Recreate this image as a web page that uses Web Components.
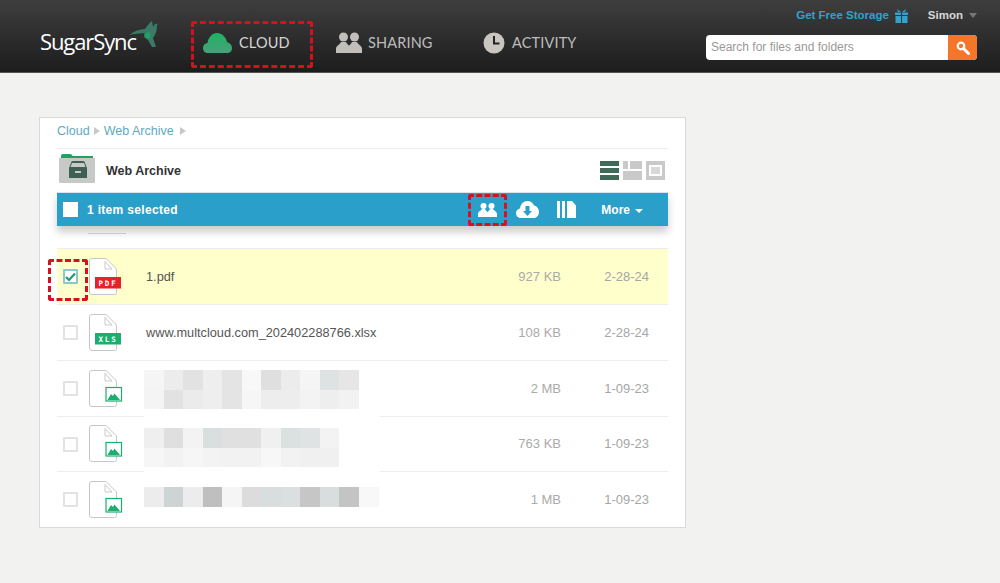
<!doctype html>
<html><head><meta charset="utf-8">
<style>
html,body{margin:0;padding:0}
body{width:1000px;height:583px;overflow:hidden;background:#f2f2f0;font-family:"Liberation Sans",Arial,sans-serif}
</style></head><body>
<ss-app></ss-app>
<script>
const def=(name,html,init)=>customElements.define(name,class extends HTMLElement{
  connectedCallback(){ if(this.shadowRoot) return; const r=this.attachShadow({mode:'open'}); r.innerHTML=typeof html==='function'?html(this):html; init&&init(r,this);}
});
const a=(e,n,d='')=>e.getAttribute(n)??d;

def('ss-mark',e=>`<style>:host{position:absolute;box-sizing:border-box;display:block;border:3px dashed #d7101f;border-radius:3px;left:${a(e,'l')}px;top:${a(e,'t')}px;width:${a(e,'w')}px;height:${a(e,'h')}px;z-index:5;pointer-events:none}</style>`);

const bird=`<svg width="30" height="30" viewBox="0 0 30 30" style="display:block"><path fill="#3b7a66" d="M1 15 C6 11 12 9 17 9 C19 6 21 3 24 1 L25 7 C26 5 27 3 30 4 L29 5 C29 10 28 14 25 18 L28 27 L24 27 L20 20 L16 17 L17 13 C12 13 6 14 1 15Z"/><path fill="#1fa45f" d="M16 14 L22 12 L22 18 L18 18Z"/></svg>`;
def('ss-logo',`<style>:host{display:block;position:relative;width:151px;height:72px;flex:none}
.t{position:absolute;left:0;top:26px;font:500 22px/30px "Open Sans",sans-serif;color:#fff;letter-spacing:-1.1px}
.b{position:absolute;left:88px;top:20px}</style><span class="t">SugarSync</span><span class="b">${bird}</span>`);

const icons={
 cloud:`<svg width="29" height="20" viewBox="0 0 29 20" style="display:block"><defs><linearGradient id="c" x1="0" y1="0" x2="0" y2="1"><stop offset="0" stop-color="#1cb463"/><stop offset="1" stop-color="#4a9f7b"/></linearGradient></defs><path fill="url(#c)" d="M5 20 C2 20 0 18 0 15 C0 12 2 10.500 4.500 10 C5 5 9 0 14 0 C19 0 23 4 24 9 C27 10 29 12 29 15 C29 18 27 20 24 20Z"/></svg>`,
 people:`<svg width="26" height="21" viewBox="0 0 26 21" style="display:block"><g fill="#c2bfba"><circle cx="7.500" cy="5" r="4.500"/><circle cx="18.500" cy="5" r="4.500"/><path d="M0 21 V17 C0 13.500 4 12.500 5 10 H10 C11 12.500 13 13 13 14 C13 13 15 12.500 16 10 H21 C22 12.500 26 13.500 26 17 V21Z"/></g></svg>`,
 clock:`<svg width="22" height="22" viewBox="0 0 22 22" style="display:block"><circle cx="11" cy="11" r="10.500" fill="#c9c6c1"/><path d="M10 4 H12 V10.500 L16.500 10.500 V12.500 H10Z" fill="#222"/></svg>`
};
def('ss-nav-item',e=>`<style>:host{display:flex;align-items:center;position:relative;height:47px;box-sizing:border-box;padding-bottom:4px;padding-left:${a(e,'pl','0')}px;color:${a(e,'color','#bdbdbd')};font:400 14.500px/20px Lato,sans-serif;letter-spacing:.15px;width:${a(e,'w')}px;flex:none}
.i{width:${a(e,'iw')}px;flex:none;display:flex}
slot{display:block}</style><span class="i">${icons[a(e,'icon')]}</span><slot></slot>`);

def('ss-search',`<style>:host{display:flex;width:271px;height:25px;border-radius:4px;overflow:hidden;background:#fff}
.f{flex:1;padding-left:5px;font:12px/25px "Liberation Sans",sans-serif;color:#999}
.b{width:29px;background:#f5762a;display:flex;align-items:center;justify-content:center}</style>
<span class="f">Search for files and folders</span><span class="b"><svg width="14" height="14" viewBox="0 0 14 14"><circle cx="5" cy="5" r="3.300" fill="none" stroke="#fff" stroke-width="2.200"/><path d="M7.500 7.500 L12.500 12.500" stroke="#fff" stroke-width="3" stroke-linecap="round"/></svg></span>`);

def('ss-header',`<style>:host{display:flex;height:73px;box-sizing:border-box;padding-left:40px;background:linear-gradient(#3e3e3e,#1d1d1d);border-bottom:1px solid #555;}
nav{display:flex;align-items:center;height:47px;margin-top:21px}
.right{margin-left:auto;margin-right:23px;display:flex;flex-direction:column;align-items:flex-end}
.top{display:flex;align-items:center;height:35px;box-sizing:border-box;padding-bottom:5px;font:bold 11.500px/16px "Liberation Sans",sans-serif}
.gf{color:#34a0cc;margin-right:5px}
.sn{color:#d8d8d8;margin-left:19px;margin-right:6px}
.car{width:0;height:0;border:4px solid transparent;border-top:5px solid #777;border-bottom:0}
</style>
<ss-logo></ss-logo>
<nav>
 <ss-nav-item icon="cloud" pl="12" iw="36" w="145" color="#d6d6d6">CLOUD<ss-mark l="0" t="0" w="122" h="47" style="display:block"></ss-mark></ss-nav-item>
 <ss-nav-item icon="people" iw="32" w="147">SHARING</ss-nav-item>
 <ss-nav-item icon="clock" iw="29" w="120">ACTIVITY</ss-nav-item>
</nav>
<div class="right">
 <div class="top"><span class="gf">Get Free Storage</span>
 <svg width="15" height="15" viewBox="0 0 15 15"><path fill="#34a0cc" d="M1 4.500 H7 V7 H1Z M8 4.500 H14 V7 H8Z M1.500 8 H7 V15 H1.500Z M8 8 H13.500 V15 H8Z M3 1 L7 4 H4 Z M12 1 L8 4 H11Z"/></svg>
 <span class="sn">Simon</span><span class="car"></span></div>
 <ss-search></ss-search>
</div>`);

def('ss-crumbs',`<style>:host{display:flex;align-items:center;height:31px;box-sizing:border-box;padding-bottom:4px;border-bottom:1px solid #ececec;font:12.500px/16px "Liberation Sans",sans-serif;color:#5fa9bf}
.s{width:0;height:0;border:4px solid transparent;border-left:6px solid #c8c8c8;border-right:0;margin:0 4px}
</style><span>Cloud</span><span class="s"></span><span>Web Archive</span><span class="s" style="margin-left:6px"></span>`);

def('ss-views',`<style>:host{display:flex;gap:4px;margin-left:auto;margin-right:3px}svg{display:block}</style>
<svg width="19" height="19" viewBox="0 0 19 19"><path fill="#3f6a58" d="M0 0H19V5H0Z M0 7H19V12H0Z M0 14H19V19H0Z"/></svg>
<svg width="19" height="19" viewBox="0 0 19 19"><path fill="#c9c9c9" d="M0 0H5V8H0Z M7 0H19V8H7Z M0 10H19V19H0Z"/></svg>
<svg width="19" height="19" viewBox="0 0 19 19"><path fill="#c9c9c9" fill-rule="evenodd" d="M0 0H19V19H0Z M3 4V15H16V4Z"/><path fill="#d8d8d8" d="M5 6H14V13H5Z"/></svg>`);

def('ss-title',`<style>:host{display:flex;align-items:center;height:43px;font:bold 12.500px/16px "Liberation Sans",sans-serif;color:#333}
svg{display:block;margin:-5px 11px 0 2px;flex:none}</style>
<svg width="36" height="29" viewBox="0 0 36 29"><path fill="#1fa45f" d="M2 2 Q2 0 4 0 H11 Q13 0 13.500 2 H34 V4 H2Z"/><path fill="#c6c9c6" d="M0 4 H36 V28 Q36 29 35 29 H1 Q0 29 0 28Z"/><path fill="#3f5f55" d="M12 9 Q12 7 14 7 H24 Q26 7 26 9 L28 14 V24 H10 V14Z"/><path fill="#c6c9c6" d="M13 9 H25 L26.500 13 H11.500Z"/><rect x="16" y="17" width="6" height="2" fill="#c6c9c6"/></svg>
<slot></slot><ss-views></ss-views>`);

def('ss-bar',`<style>:host{display:flex;align-items:center;position:relative;z-index:2;height:34px;background:#2a9fc9;color:#fff;box-shadow:0 6px 8px rgba(0,0,0,.2);font:bold 12px/16px "Liberation Sans",sans-serif;border-top:1px solid #d5e7ee;box-sizing:border-box}
.c{width:15px;height:15px;background:#fff;margin:0 9px 0 6px;flex:none}
.t{letter-spacing:.32px}
.sp{flex:1}
.ic{position:relative;display:flex;align-items:center;justify-content:center;flex:none}
.more{display:flex;align-items:center;margin-left:25px;margin-right:25px}
.car{width:0;height:0;border:4px solid transparent;border-top:4px solid #fff;border-bottom:0;margin-left:5px;margin-top:3px}
</style>
<span class="c"></span><span class="t">1 item selected</span><span class="sp"></span>
<span class="ic" style="width:19px;margin-right:19px"><svg width="19" height="14" viewBox="0 0 19 14"><g fill="#fff"><circle cx="5.500" cy="3" r="3"/><circle cx="13.500" cy="3" r="3"/><path d="M0 14 V11 C0 8.500 3 8 4 6 H7 C8 8 9.500 8.500 9.500 9.500 C9.500 8.500 11 8 12 6 H15 C16 8 19 8.500 19 11 V14Z"/></g></svg>
<ss-mark l="-10" t="-9" w="39" h="32" style="display:block"></ss-mark></span>
<span class="ic" style="width:23px;margin-right:18px"><svg width="23" height="17" viewBox="0 0 23 17"><path fill="#fff" d="M5 17 C1.500 17 0 14.500 0 12 C0 9.500 2 8 4 7.500 C4.500 3 7.500 0 11.500 0 C14.500 0 17 2 18 4.500 C21 5 23 8 23 11 C23 14.500 20.500 17 18 17Z"/><path fill="#2a9fc9" d="M9.500 5 H13.500 V10 H16 L11.500 15 L7 10 H9.500Z"/></svg></span>
<span class="ic" style="width:19px"><svg width="19" height="17" viewBox="0 0 19 17"><path fill="#fff" d="M0 0H3V17H0Z M5 0H8V17H5Z M10 0H15L19 4.500V17H10Z"/></svg></span>
<span class="more">More<span class="car"></span></span>`);

const doc=`<path fill="#fff" stroke="#c6c6c6" stroke-width="1" d="M3 .500 H17 L27.500 11 V34.500 Q27.500 36.500 25.500 36.500 H3 Q.500 36.500 .500 34 V3 Q.500 .500 3 .500Z"/><path fill="#fff" stroke="#c9c9c9" d="M16 3.500 V11 H23Z"/>`;
const badge=(fill,t)=>`<rect x="6" y="19" width="26" height="11.500" fill="${fill}"/><text x="19" y="27.500" text-anchor="middle" font-family="DejaVu Sans Mono,monospace" font-weight="bold" font-size="7.500" letter-spacing="1.800" fill="#fff">${t}</text>`;
const img=`<rect x="17" y="17.500" width="15.500" height="13.500" fill="#fff" stroke="#1cae6e" stroke-width="1.200"/><path fill="#1cae6e" d="M18.500 30 L22 24 L24 26 L25.500 23.500 L31 30Z"/>`;
def('ss-file-icon',e=>{const k=a(e,'kind');const inner=k==='pdf'?badge('#e8202a','PDF'):k==='xls'?badge('#1cae6e','XLS'):img;
 return `<style>:host{display:block;width:34px;height:38px;flex:none}svg{display:block;overflow:visible}</style><svg width="34" height="38" viewBox="0 0 34 38">${doc}${inner}</svg>`});

def('ss-blur',e=>{
 const rows=a(e,'cells').split('|').map(r=>r.split(','));
 const top=a(e,'pt','0');
 return `<style>:host{display:block;position:absolute;left:87px;top:${top}px;}
 .r{display:flex;height:19.500px}.r i{display:block;width:19.550px;flex:none}
 .cut{position:absolute;left:0;width:236px;height:3px;background:#fff;top:${a(e,'cut','46')}px}</style>
 ${rows.map(r=>`<div class="r">${r.map(c=>`<i style="background:#${c}"></i>`).join('')}</div>`).join('')}${a(e,'cut')?'<div class="cut"></div>':''}`});

def('ss-file-row',e=>{const sel=e.hasAttribute('selected');
 return `<style>:host{display:flex;align-items:center;position:relative;height:${a(e,'h','56')}px;box-sizing:border-box;border-bottom:1px solid #ececec;background:${sel?'#ffffcc':'#fff'};font:13px/16px "Liberation Sans",sans-serif;color:#555}
 .c{width:15px;height:15px;box-sizing:border-box;border:2px solid ${sel?'#8cc7cf':'#e2e2e2'};background:#fff;margin:0 11px 0 6px;flex:none;display:flex;align-items:center;justify-content:center;border-radius:1px}
 .n{margin-left:23px;flex:1;font-size:12.750px;color:#555}
 .s{width:70px;text-align:right;color:#aaa;flex:none}
 .d{width:88px;text-align:right;color:#a6a6a6;margin-right:19px;flex:none}
 </style><span class="c">${sel?'<svg width="11" height="10" viewBox="0 0 11 10"><path d="M1 5 L4 8 L10 1.500" fill="none" stroke="#1a9e70" stroke-width="2.200"/></svg>':''}</span>
 <ss-file-icon kind="${a(e,'kind')}"></ss-file-icon><span class="n">${a(e,'name')}</span><slot></slot><span class="s">${a(e,'size')}</span><span class="d">${a(e,'date')}</span>`});

def('ss-stub',`<style>:host{display:block;height:23px;border-bottom:1px solid #ececec;box-sizing:border-box;position:relative}
i{position:absolute;left:31px;top:7px;width:38px;height:1px;background:#d8d8d8}</style><i></i>`);

def('ss-card',`<style>:host{display:block;width:647px;height:411px;box-sizing:border-box;border:1px solid #d9d9d9;background:#fff;padding:0 17px;position:relative}</style><slot></slot>`);

def('ss-app',`<style>:host{display:block}main{padding:44px 0 0 39px;display:block}</style>
<ss-header></ss-header>
<main><ss-card>
 <ss-crumbs></ss-crumbs>
 <ss-title>Web Archive</ss-title>
 <ss-bar></ss-bar>
 <ss-stub></ss-stub>
 <ss-file-row selected kind="pdf" name="1.pdf" size="927 KB" date="2-28-24"><ss-mark l="-9" t="10" w="40" h="42" style="display:block"></ss-mark></ss-file-row>
 <ss-file-row kind="xls" name="www.multcloud.com_202402288766.xlsx" size="108 KB" date="2-28-24"></ss-file-row>
 <ss-file-row kind="img" size="2 MB" date="1-09-23"><ss-blur pt="9" cut="46" cells="f5f5f5,ececec,e2e2e2,eeeeee,e4e4e4,f8f8f8,dfdfdf,ececec,f5f5f5,dfe2e2,e6e6e6|f4f4f4,e2e2e2,ebebeb,eeeeee,e4e4e4,f6f6f6,ededed,ededed,f3f3f3,eeeeee,f2f2f2"></ss-blur></ss-file-row>
 <ss-file-row h="55" kind="img" size="763 KB" date="1-09-23"><ss-blur pt="11" cut="43" cells="efefef,dfdfdf,f3f3f3,d9dfdf,e0e0e0,e0e0e0,f0f0f0,dbe0e0,e0e3e3,f3f3f3|f6f6f6,f2f2f2,f6f6f6,f3f3f3,f2f2f2,f2f2f2,f7f7f7,f2f2f2,f0f0f0,f0f0f0"></ss-blur></ss-file-row>
 <ss-file-row h="55" kind="img" size="1 MB" date="1-09-23" style="border-bottom:0"><ss-blur pt="15" cells="ececec,ced4d4,ececec,bfbfbf,f5f5f5,dcdcdc,d8dddd,dcdfdf,c6c6c6,d8dddd,c4c4c4,f8f8f8"></ss-blur></ss-file-row>
</ss-card></main>`);
</script>
</body></html>
